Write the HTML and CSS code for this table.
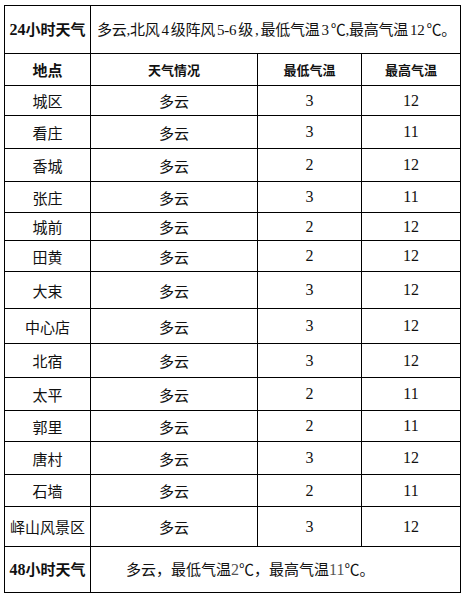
FILE: index.html
```html
<!DOCTYPE html>
<html lang="zh-CN">
<head>
<meta charset="utf-8">
<title>天气预报</title>
<link rel="stylesheet" href="styles.css">
</head>
<body>
<table class="weather">
  <colgroup>
    <col class="c1"><col class="c2"><col class="c3"><col class="c4">
  </colgroup>
  <tr class="r-top">
    <td class="label"><span class="num">24</span>小时天气</td>
    <td colspan="3" class="summary">多云<span class="num">,</span>北风<span class="num sp">4</span>级阵风<span class="num sp">5-6</span>级<span class="num sp">,</span>最低气温<span class="num sp">3</span>℃<span class="num">,</span>最高气温<span class="num sp">12</span>℃。</td>
  </tr>
  <tr class="r-head">
    <th class="big">地点</th>
    <th>天气情况</th>
    <th>最低气温</th>
    <th>最高气温</th>
  </tr>
  <tr class="h30"><td>城区</td><td>多云</td><td class="num">3</td><td class="num">12</td></tr>
  <tr class="h33"><td>看庄</td><td>多云</td><td class="num">3</td><td class="num">11</td></tr>
  <tr class="h33"><td>香城</td><td>多云</td><td class="num">2</td><td class="num">12</td></tr>
  <tr class="h31"><td>张庄</td><td>多云</td><td class="num">3</td><td class="num">11</td></tr>
  <tr class="h28"><td>城前</td><td>多云</td><td class="num">2</td><td class="num">12</td></tr>
  <tr class="h31"><td>田黄</td><td>多云</td><td class="num">2</td><td class="num">12</td></tr>
  <tr class="h37"><td>大束</td><td>多云</td><td class="num">3</td><td class="num">12</td></tr>
  <tr class="h35"><td>中心店</td><td>多云</td><td class="num">3</td><td class="num">12</td></tr>
  <tr class="h34"><td>北宿</td><td>多云</td><td class="num">3</td><td class="num">12</td></tr>
  <tr class="h33"><td>太平</td><td>多云</td><td class="num">2</td><td class="num">11</td></tr>
  <tr class="h31"><td>郭里</td><td>多云</td><td class="num">2</td><td class="num">11</td></tr>
  <tr class="h33"><td>唐村</td><td>多云</td><td class="num">3</td><td class="num">12</td></tr>
  <tr class="h32"><td>石墙</td><td>多云</td><td class="num">2</td><td class="num">11</td></tr>
  <tr class="h40"><td>峄山风景区</td><td>多云</td><td class="num">3</td><td class="num">12</td></tr>
  <tr class="r-bottom">
    <td class="label"><span class="num">48</span>小时天气</td>
    <td colspan="3" class="summary2">多云，最低气温<span class="num gray">2</span>℃，最高气温<span class="num gray">11</span>℃。</td>
  </tr>
</table>
</body>
</html>
```
FILE: styles.css
```css
html, body {
  margin: 0;
  padding: 0;
  background: #ffffff;
}
body {
  padding: 5px 0 0 4px;
  font-family: "Noto Sans CJK SC", "Liberation Sans", sans-serif;
  color: #111;
}
.weather {
  border-collapse: collapse;
  table-layout: fixed;
  width: 456px;
}
.c1 { width: 86px; }
.c2 { width: 167px; }
.c3 { width: 104px; }
.c4 { width: 99px; }
.weather td, .weather th {
  border: 1px solid #000;
  padding: 0;
  text-align: center;
  vertical-align: middle;
  font-size: 15px;
  font-weight: 400;
  line-height: 1;
  white-space: nowrap;
}
.weather th {
  font-size: 13px;
  font-weight: 700;
}
.weather th.big { font-size: 15px; }
.num {
  font-family: "Liberation Serif", "Noto Sans CJK SC", serif;
  font-size: 16px;
}
.weather td.num { font-size: 16px; }
.gray { color: #555; }
.label {
  font-weight: 700 !important;
}
.weather td.summary {
  text-align: left;
  padding-left: 6px;
  letter-spacing: -0.25px;
}
.summary .num { font-size: 15px; }
.summary .sp { margin: 0 2px; }
.weather td.summary2 {
  text-align: left;
  padding-left: 35px;
}
.r-top { height: 48px; }
.r-head { height: 32px; }
.h28 { height: 28px; }
.h30 { height: 30px; }
.h31 { height: 31px; }
.h32 { height: 32px; }
.h33 { height: 33px; }
.h34 { height: 34px; }
.h35 { height: 35px; }
.h37 { height: 37px; }
.h40 { height: 40px; }
.r-bottom { height: 46px; }
```
